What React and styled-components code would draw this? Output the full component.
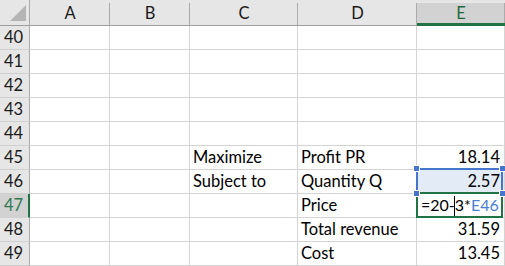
import React from 'react';
import styled, { createGlobalStyle } from 'styled-components';

const GlobalStyle = createGlobalStyle`
  html, body {
    margin: 0;
    padding: 0;
    background: #ffffff;
  }
  body {
    font-family: Lato, "Open Sans", "Liberation Sans", sans-serif;
  }
`;

const COLS = [
  { key: 'A', width: 80 },
  { key: 'B', width: 80 },
  { key: 'C', width: 108 },
  { key: 'D', width: 119 },
  { key: 'E', width: 88 },
];

const ROWS = [
  { n: 40 },
  { n: 41 },
  { n: 42 },
  { n: 43 },
  { n: 44 },
  { n: 45, C: 'Maximize', D: 'Profit PR', E: '18.14' },
  { n: 46, C: 'Subject to', D: 'Quantity Q', E: '2.57', range: true },
  { n: 47, D: 'Price', active: true },
  { n: 48, D: 'Total revenue', E: '31.59' },
  { n: 49, D: 'Cost', E: '13.45' },
];

const Sheet = styled.div`
  display: grid;
  grid-template-columns: 30px ${COLS.map((c) => c.width + 'px').join(' ')};
  grid-template-rows: 26px repeat(${ROWS.length}, 24px);
  width: 505px;
  height: 266px;
  overflow: hidden;
  font-size: 16.5px;
  color: #000;
`;

const Corner = styled.div`
  position: relative;
  background: #e6e6e6;
  border-right: 1px solid #ababab;
  border-bottom: 1px solid #9e9e9e;

  &::after {
    content: '';
    position: absolute;
    right: 3px;
    bottom: 4px;
    width: 0;
    height: 0;
    border-left: 16px solid transparent;
    border-bottom: 16px solid #b5b5b5;
  }
`;

const ColHead = styled.div`
  display: flex;
  align-items: flex-end;
  justify-content: center;
  background: #e6e6e6;
  border-bottom: ${(p) => (p.$selected ? '3px solid #217346' : '1px solid #9e9e9e')};
  padding-bottom: ${(p) => (p.$selected ? '2px' : '4px')};
  box-sizing: border-box;
  position: relative;
  color: ${(p) => (p.$selected ? '#1e6b41' : '#1a1a1a')};
  line-height: 1;

  &::before {
    content: '';
    position: absolute;
    top: 3px;
    left: 0;
    right: 0;
    bottom: 0;
    background: ${(p) => (p.$selected ? '#d2d2d2' : 'transparent')};
    border-right: 1px solid #ababab;
  }

  span {
    position: relative;
  }
`;

const RowHead = styled.div`
  display: flex;
  align-items: flex-end;
  padding: 0 0 4px 4px;
  box-sizing: border-box;
  background: ${(p) => (p.$selected ? '#d2d2d2' : '#e6e6e6')};
  border-right: ${(p) => (p.$selected ? '2px solid #217346' : '1px solid #ababab')};
  border-bottom: 1px solid #d0d0d0;
  color: ${(p) => (p.$selected ? '#2f7a52' : '#1a1a1a')};
  line-height: 1;
`;

const Cell = styled.div`
  position: relative;
  display: flex;
  align-items: flex-end;
  justify-content: ${(p) => (p.$align === 'right' ? 'flex-end' : 'flex-start')};
  padding: 0 4px 4px 3px;
  box-sizing: border-box;
  background: ${(p) => (p.$fill ? '#e3ebf7' : '#ffffff')};
  border-right: 1px solid #d4d4d4;
  border-bottom: 1px solid #d4d4d4;
  line-height: 1;
  white-space: nowrap;
`;

const RangeBox = styled.div`
  position: absolute;
  top: -2px;
  left: -1px;
  right: 1px;
  bottom: -1px;
  border: 2px solid #4676cc;
  pointer-events: none;
`;

const Handle = styled.div`
  position: absolute;
  width: 5px;
  height: 5px;
  background: #4676cc;
  outline: 1px solid #ffffff;
  ${(p) => (p.$top ? 'top: -4px;' : 'bottom: -4px;')}
  ${(p) => (p.$left ? 'left: -4px;' : 'right: -4px;')}
  z-index: 2;
`;

const ActiveBox = styled.div`
  position: absolute;
  top: -2px;
  left: -1px;
  right: 1px;
  bottom: -1px;
  border: 2px solid #217346;
  pointer-events: none;
`;

const Formula = styled.span`
  position: relative;
  font-size: 16px;
  padding-left: 1px;
`;

const Ref = styled.span`
  color: #4a7fd4;
`;

const Caret = styled.span`
  display: inline-block;
  width: 1px;
  height: 20px;
  margin: 0 -0.5px -3px;
  background: #000;
  vertical-align: bottom;
`;

export default function App() {
  return (
    <>
      <GlobalStyle />
      <Sheet>
        <Corner />
        {COLS.map((c) => (
          <ColHead key={c.key} $selected={c.key === 'E'}>
            <span>{c.key}</span>
          </ColHead>
        ))}
        {ROWS.map((r) => (
          <React.Fragment key={r.n}>
            <RowHead $selected={r.active}>{r.n}</RowHead>
            <Cell />
            <Cell />
            <Cell>{r.C}</Cell>
            <Cell>{r.D}</Cell>
            {r.active ? (
              <Cell>
                <ActiveBox />
                <Formula>
                  =20-<Caret />3*<Ref>E46</Ref>
                </Formula>
              </Cell>
            ) : (
              <Cell $align="right" $fill={r.range}>
                {r.range && (
                  <RangeBox>
                    <Handle $top $left />
                    <Handle $top />
                    <Handle $left />
                    <Handle />
                  </RangeBox>
                )}
                {r.E}
              </Cell>
            )}
          </React.Fragment>
        ))}
      </Sheet>
    </>
  );
}
